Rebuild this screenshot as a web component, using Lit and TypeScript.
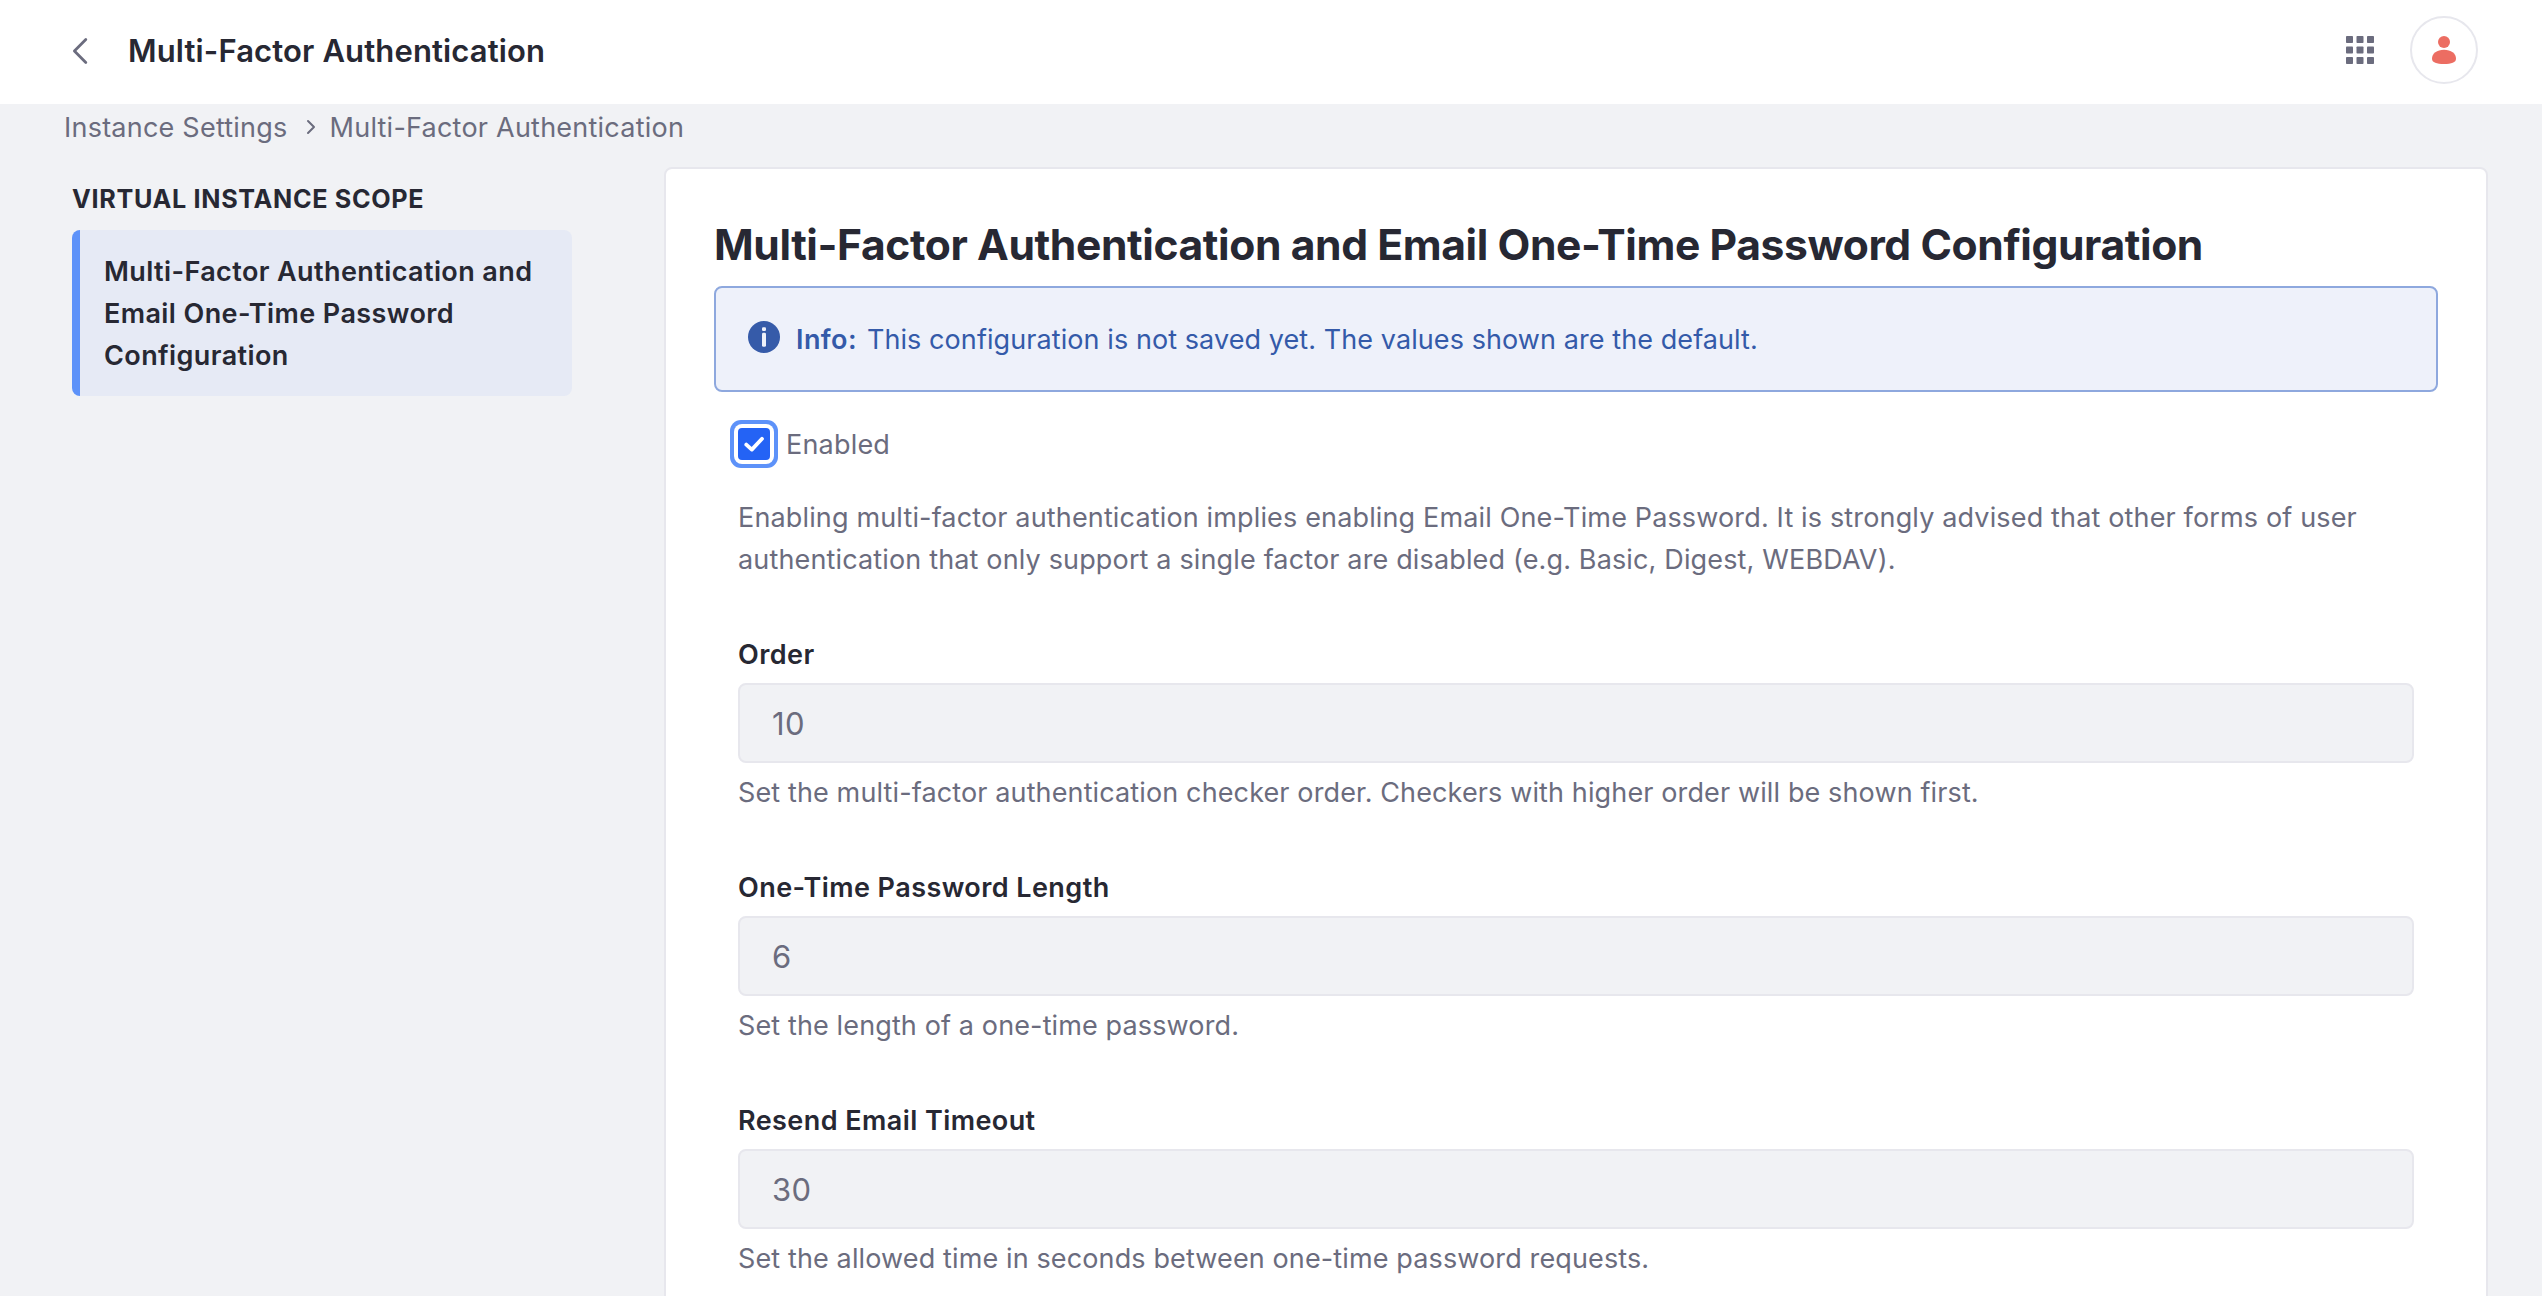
import { LitElement, html, css } from "lit";
import { customElement, property } from "lit/decorators.js";

@customElement("app-header")
export class AppHeader extends LitElement {
  static styles = css`
    :host {
      display: block;
    }
    .bar {
      display: flex;
      align-items: flex-start;
      height: 104px;
      padding: 0 64px 0 72px;
      background: #fff;
      box-sizing: border-box;
    }
    .back {
      display: block;
      width: 16px;
      height: 28px;
      margin: 37px 40px 0 0;
    }
    .title {
      flex: 1;
      margin: 27px 0 0;
      font-size: 31px;
      font-weight: 600;
      line-height: 48px;
      letter-spacing: 0.13px;
      color: #272833;
    }
    .apps {
      display: block;
      width: 28px;
      height: 28px;
      margin: 36px 36px 0 0;
    }
    .avatar {
      display: flex;
      justify-content: center;
      width: 64px;
      height: 64px;
      margin-top: 16px;
      border: 2px solid #e7e7ed;
      border-radius: 50%;
    }
    .person {
      display: block;
      width: 24px;
      height: 28px;
      margin-top: 18px;
    }
  `;

  render() {
    const cells = [0, 10.5, 21];
    return html`
      <header class="bar">
        <svg class="back" viewBox="0 0 16 28">
          <path d="M13.8 2.6 L2.4 14 L13.8 25.4" fill="none" stroke="#6b6c7e" stroke-width="2.8" stroke-linecap="round" stroke-linejoin="round" />
        </svg>
        <h1 class="title">Multi-Factor Authentication</h1>
        <svg class="apps" viewBox="0 0 28 28" fill="#6b6c7e">
          <g>
            <rect x=${cells[0]} y="0" width="7" height="7" rx="0.8" /><rect x=${cells[1]} y="0" width="7" height="7" rx="0.8" /><rect x=${cells[2]} y="0" width="7" height="7" rx="0.8" />
            <rect x=${cells[0]} y="10.5" width="7" height="7" rx="0.8" /><rect x=${cells[1]} y="10.5" width="7" height="7" rx="0.8" /><rect x=${cells[2]} y="10.5" width="7" height="7" rx="0.8" />
            <rect x=${cells[0]} y="21" width="7" height="7" rx="0.8" /><rect x=${cells[1]} y="21" width="7" height="7" rx="0.8" /><rect x=${cells[2]} y="21" width="7" height="7" rx="0.8" />
          </g>
        </svg>
        <div class="avatar">
          <svg class="person" viewBox="0 0 24 28" fill="#ec6d62">
            <circle cx="12" cy="6" r="6" />
            <path d="M0 22.8 C0 17.2 5 13.7 12 13.7 C19 13.7 24 17.2 24 22.8 C24 26.6 19.4 28 12 28 C4.6 28 0 26.6 0 22.8 Z" />
          </svg>
        </div>
      </header>
    `;
  }
}

@customElement("config-field")
export class ConfigField extends LitElement {
  static styles = css`
    :host {
      display: block;
    }
    .field {
      display: flex;
      flex-direction: column;
    }
    .label {
      margin-bottom: 7px;
      font-size: 27px;
      font-weight: 600;
      line-height: 42px;
      letter-spacing: 0.43px;
      color: #272833;
    }
    .input {
      display: block;
      width: 100%;
      height: 80px;
      padding: 0 32px;
      border: 2px solid #e7e7ed;
      border-radius: 8px;
      box-sizing: border-box;
      background: #f1f2f5;
      font: 400 31px/48px Inter, "Liberation Sans", sans-serif;
      letter-spacing: 0.4px;
      color: #6b6c7e;
      outline: none;
    }
    .help {
      margin-top: 9px;
      font-size: 27px;
      line-height: 42px;
      letter-spacing: 0.125px;
      color: #6b6c7e;
    }
  `;

  @property() label = "";
  @property() value = "";
  @property() help = "";

  render() {
    return html`
      <div class="field">
        <label class="label" for="control">${this.label}</label>
        <input class="input" id="control" type="text" .value=${this.value} />
        <div class="help">${this.help}</div>
      </div>
    `;
  }
}

interface FieldSpec {
  label: string;
  value: string;
  help: string;
}

const FIELDS: FieldSpec[] = [
  {
    label: "Order",
    value: "10",
    help: "Set the multi-factor authentication checker order. Checkers with higher order will be shown first.",
  },
  {
    label: "One-Time Password Length",
    value: "6",
    help: "Set the length of a one-time password.",
  },
  {
    label: "Resend Email Timeout",
    value: "30",
    help: "Set the allowed time in seconds between one-time password requests.",
  },
];

@customElement("app-root")
export class AppRoot extends LitElement {
  static styles = css`
    :host {
      display: block;
      height: 100vh;
      overflow: hidden;
      background: #f1f2f5;
      font-family: Inter, "Liberation Sans", sans-serif;
      color: #272833;
    }
    .breadcrumb {
      display: flex;
      align-items: center;
      height: 42px;
      margin: 3px 0 18px;
      padding-left: 64px;
      font-size: 27px;
      line-height: 42px;
      letter-spacing: 0.23px;
      color: #6b6c7e;
    }
    .separator {
      display: block;
      width: 10px;
      height: 16px;
      margin: -2px 14px 0 18px;
    }
    .columns {
      display: flex;
      align-items: flex-start;
      gap: 92px;
      padding: 0 54px 0 72px;
    }
    .sidebar {
      flex: none;
      width: 500px;
      padding-top: 11px;
    }
    .scope {
      margin: 0 0 10px;
      font-size: 25.2px;
      font-weight: 700;
      line-height: 42px;
      letter-spacing: 0.67px;
      text-transform: uppercase;
    }
    .nav-item {
      padding: 21px 23px 19px 24px;
      border-left: 8px solid #5d92f9;
      border-radius: 8px;
      background: #e6eaf5;
      font-size: 27px;
      font-weight: 600;
      line-height: 42px;
      letter-spacing: 0.4px;
    }
    .sheet {
      flex: 1;
      min-width: 0;
      min-height: 1200px;
      padding: 49px 48px;
      border: 2px solid #e7e7ed;
      border-radius: 8px;
      box-sizing: border-box;
      background: #fff;
    }
    .heading {
      margin: 0 0 15px;
      font-size: 42.6px;
      font-weight: 700;
      line-height: 53px;
      letter-spacing: -0.4px;
    }
    .alert {
      display: flex;
      align-items: flex-start;
      padding: 31px 32px 29px;
      border: 2px solid #8ea8de;
      border-radius: 8px;
      background: #eef1fa;
      font-size: 27px;
      line-height: 42px;
      color: #345aa9;
    }
    .info-icon {
      display: block;
      width: 32px;
      height: 32px;
      margin: 2px 16px 0 0;
    }
    .lead {
      margin-right: 10px;
      font-weight: 600;
      letter-spacing: 0.4px;
    }
    .message {
      letter-spacing: 0.08px;
    }
    .form {
      padding: 31px 24px 0;
    }
    .check-row {
      display: flex;
      align-items: center;
      height: 42px;
      margin-bottom: 32px;
      font-size: 27px;
      line-height: 42px;
      letter-spacing: 0.2px;
      color: #6b6c7e;
    }
    .checkbox {
      width: 32px;
      height: 32px;
      margin-right: 16px;
      border-radius: 4px;
      background: #2463f5;
      box-shadow: 0 0 0 4px #fff, 0 0 0 8px #5d92f9;
    }
    .check-label {
      margin-top: 2px;
    }
    .tick {
      display: block;
      width: 32px;
      height: 32px;
    }
    .description {
      margin: 0 0 53px;
      font-size: 27px;
      line-height: 42px;
      letter-spacing: 0.15px;
      color: #6b6c7e;
    }
    .fields {
      display: flex;
      flex-direction: column;
      gap: 53px;
    }
  `;

  render() {
    return html`
      <app-header></app-header>
      <nav class="breadcrumb">
        <span>Instance Settings</span>
        <svg class="separator" viewBox="0 0 10 16">
          <path d="M2 2 L8 8 L2 14" fill="none" stroke="#6b6c7e" stroke-width="2" stroke-linecap="round" stroke-linejoin="round" />
        </svg>
        <span>Multi-Factor Authentication</span>
      </nav>
      <div class="columns">
        <aside class="sidebar">
          <h2 class="scope">Virtual Instance Scope</h2>
          <div class="nav-item">Multi-Factor Authentication and Email One-Time Password Configuration</div>
        </aside>
        <main class="sheet">
          <h2 class="heading">Multi-Factor Authentication and Email One-Time Password Configuration</h2>
          <div class="alert">
            <svg class="info-icon" viewBox="0 0 32 32">
              <circle cx="16" cy="16" r="16" fill="#365ba9" />
              <rect x="14" y="6.2" width="4" height="3.8" rx="1.2" fill="#eef1fa" />
              <rect x="14" y="11.8" width="4" height="14" rx="1.4" fill="#eef1fa" />
            </svg>
            <span class="lead">Info:</span>
            <span class="message">This configuration is not saved yet. The values shown are the default.</span>
          </div>
          <div class="form">
            <div class="check-row">
              <div class="checkbox" role="checkbox" aria-checked="true">
                <svg class="tick" viewBox="0 0 32 32">
                  <path d="M8.3 16.6 L13.8 21.6 L24 10.8" fill="none" stroke="#fff" stroke-width="3.8" stroke-linecap="round" stroke-linejoin="round" />
                </svg>
              </div>
              <span class="check-label">Enabled</span>
            </div>
            <p class="description">
              Enabling multi-factor authentication implies enabling Email One-Time Password. It is strongly advised that other forms of user authentication that only support a single factor are disabled (e.g. Basic, Digest, WEBDAV).
            </p>
            <div class="fields">
              ${FIELDS.map((f) => html`<config-field .label=${f.label} .value=${f.value} .help=${f.help}></config-field>`)}
            </div>
          </div>
        </main>
      </div>
    `;
  }
}
